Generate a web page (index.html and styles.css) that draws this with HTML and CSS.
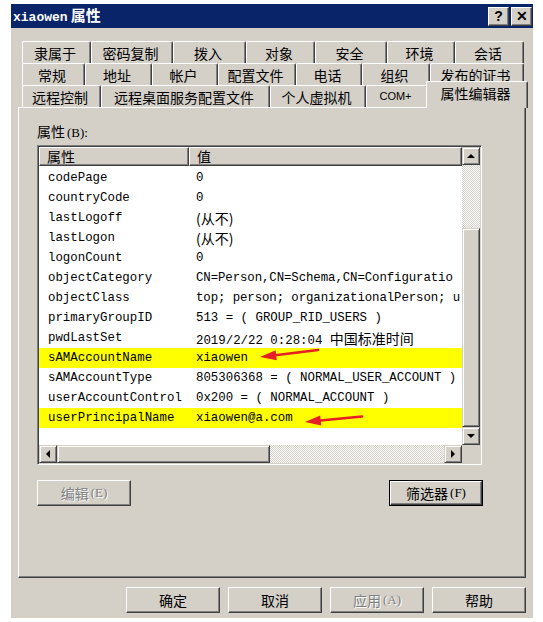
FILE: index.html
```html
<!DOCTYPE html>
<html lang="zh-CN">
<head>
    <meta charset="UTF-8">
    <title>xiaowen 属性</title>
    <link rel="stylesheet" href="styles.css">
</head>
<body>
    <div class="window">
        <div class="titlebar">
            <div class="title"><span class="title-name">xiaowen</span> <span class="title-cjk">属性</span></div>
            <div class="title-buttons">
                <div class="title-btn">?</div>
                <div class="title-btn">&#x2715;</div>
            </div>
        </div>

        <div class="sheet">
            <div class="tabs">
                <div class="tab-row">
                    <div class="tab w69">隶属于</div>
                    <div class="tab w82">密码复制</div>
                    <div class="tab w73">拨入</div>
                    <div class="tab w69">对象</div>
                    <div class="tab w72">安全</div>
                    <div class="tab w68">环境</div>
                    <div class="tab w69">会话</div>
                </div>
                <div class="tab-row">
                    <div class="tab w63">常规</div>
                    <div class="tab w67">地址</div>
                    <div class="tab w66">帐户</div>
                    <div class="tab w78">配置文件</div>
                    <div class="tab w66">电话</div>
                    <div class="tab w68">组织</div>
                    <div class="tab w94">发布的证书</div>
                </div>
                <div class="tab-row">
                    <div class="tab w79">远程控制</div>
                    <div class="tab w169">远程桌面服务配置文件</div>
                    <div class="tab w96">个人虚拟机</div>
                    <div class="tab w62 tab-small">COM+</div>
                    <div class="tab tab-active">属性编辑器</div>
                </div>
            </div>

            <div class="panel">
                <div class="label">属性<span class="mnemonic">(B):</span></div>

                <div class="listview">
                    <div class="list-main">
                        <div class="list-header">
                            <div class="col-head col-name">属性</div>
                            <div class="col-head col-value">值</div>
                        </div>
                        <div class="list-body">
                            <div class="row"><span>codePage</span><span>0</span></div>
                            <div class="row"><span>countryCode</span><span>0</span></div>
                            <div class="row"><span>lastLogoff</span><span class="cjk">(从不)</span></div>
                            <div class="row"><span>lastLogon</span><span class="cjk">(从不)</span></div>
                            <div class="row"><span>logonCount</span><span>0</span></div>
                            <div class="row"><span>objectCategory</span><span class="clip">CN=Person,CN=Schema,CN=Configuratio</span></div>
                            <div class="row"><span>objectClass</span><span class="clip">top; person; organizationalPerson; u</span></div>
                            <div class="row"><span>primaryGroupID</span><span>513 = ( GROUP_RID_USERS )</span></div>
                            <div class="row"><span>pwdLastSet</span><span>2019/2/22 0:28:04 <span class="cjk">中国标准时间</span></span></div>
                            <div class="row row-marked"><span>sAMAccountName</span><span>xiaowen</span></div>
                            <div class="row"><span>sAMAccountType</span><span>805306368 = ( NORMAL_USER_ACCOUNT )</span></div>
                            <div class="row"><span>userAccountControl</span><span>0x200 = ( NORMAL_ACCOUNT )</span></div>
                            <div class="row row-marked"><span>userPrincipalName</span><span>xiaowen@a.com</span></div>

                            <svg class="marks" width="423" height="277" viewBox="0 0 423 277">
                                <line x1="279" y1="184" x2="234" y2="189.5" stroke="#e61e25" stroke-width="2.6" stroke-linecap="round"/>
                                <polygon points="221,191 236.6,184.3 237.8,194.2" fill="#e61e25"/>
                                <line x1="323" y1="250.5" x2="279" y2="254.8" stroke="#e61e25" stroke-width="2.6" stroke-linecap="round"/>
                                <polygon points="266,256 281.2,249.6 282.2,259.6" fill="#e61e25"/>
                            </svg>
                        </div>
                    </div>
                    <div class="vscroll">
                        <div class="sb-btn"><span class="arrow-up"></span></div>
                        <div class="sb-track track-top"></div>
                        <div class="sb-thumb"></div>
                        <div class="sb-btn"><span class="arrow-down"></span></div>
                    </div>
                    <div class="hscroll">
                        <div class="sb-btn"><span class="arrow-left"></span></div>
                        <div class="sb-thumb hthumb"></div>
                        <div class="sb-track"></div>
                        <div class="sb-btn"><span class="arrow-right"></span></div>
                    </div>
                    <div class="corner"></div>
                </div>

                <div class="panel-buttons">
                    <div class="btn btn-disabled">编辑<span class="mnemonic">(E)</span></div>
                    <div class="btn btn-default"><div class="btn-inner">筛选器<span class="mnemonic">(F)</span></div></div>
                </div>
            </div>

            <div class="dialog-buttons">
                <div class="btn">确定</div>
                <div class="btn">取消</div>
                <div class="btn btn-disabled">应用<span class="mnemonic">(A)</span></div>
                <div class="btn">帮助</div>
            </div>
        </div>
    </div>
</body>
</html>
```

FILE: styles.css
```css
* {
    margin: 0;
    padding: 0;
    box-sizing: border-box;
}

body {
    background: #fff;
    color: #000;
    font-family: "Noto Sans CJK SC", sans-serif;
    font-size: 14px;
}

.window {
    margin: 4px 0 0 11px;
    width: 522px;
    height: 614px;
    background: #d4d0c8;
}

/* title bar */
.titlebar {
    height: 24px;
    background: #0a246a;
    display: flex;
    align-items: center;
    justify-content: space-between;
    padding: 0 1px 0 2px;
}

.title {
    color: #fff;
    font-weight: bold;
    line-height: 24px;
    white-space: nowrap;
}

.title-name {
    font-family: "Liberation Mono", monospace;
    font-size: 13px;
}

.title-cjk {
    font-size: 15px;
}

.title-buttons {
    display: flex;
    gap: 2px;
}

.title-btn {
    width: 21px;
    height: 19px;
    background: #d4d0c8;
    border-top: 1px solid #fff;
    border-left: 1px solid #fff;
    border-right: 1px solid #404040;
    border-bottom: 1px solid #404040;
    box-shadow: inset -1px -1px #808080;
    font-family: "Liberation Sans", sans-serif;
    font-weight: bold;
    font-size: 14px;
    line-height: 16px;
    text-align: center;
}

/* tabs */
.sheet {
    padding: 13px 7px 0 7px;
}

.tabs {
    padding-left: 4px;
}

.tab-row {
    display: flex;
    align-items: flex-end;
    height: 22px;
}

.tab {
    height: 22px;
    flex: none;
    display: flex;
    align-items: center;
    justify-content: center;
    border-top: 1px solid #fff;
    border-left: 1px solid #fff;
    border-right: 1px solid #404040;
    box-shadow: inset -1px 0 #808080;
    border-radius: 2px 2px 0 0;
    font-size: 14px;
    line-height: 1;
    white-space: nowrap;
    padding-right: 3px;
}

.w62 { width: 62px; }
.w63 { width: 63px; }
.w66 { width: 66px; }
.w67 { width: 67px; }
.w68 { width: 68px; }
.w69 { width: 69px; }
.w72 { width: 72px; }
.w73 { width: 73px; }
.w78 { width: 78px; }
.w79 { width: 79px; }
.w82 { width: 82px; }
.w94 { width: 94px; }
.w96 { width: 96px; }
.w169 { width: 169px; }

.tab-small {
    font-family: "Liberation Sans", sans-serif;
    font-size: 11px;
}

.tab-active {
    position: relative;
    z-index: 1;
    width: 102px;
    height: 27px;
    margin-left: -2px;
    margin-bottom: -1px;
    padding-bottom: 4px;
    background: #d4d0c8;
}

/* property page */
.panel {
    height: 471px;
    border-top: 1px solid #fff;
    border-left: 1px solid #fff;
    border-right: 1px solid #404040;
    border-bottom: 1px solid #404040;
    box-shadow: inset -1px -1px #808080;
    padding: 15px 0 0 18px;
}

.label {
    height: 16px;
    line-height: 16px;
    font-size: 14px;
}

.mnemonic {
    font-family: "Liberation Serif", serif;
    font-size: 13px;
    margin-left: 2px;
}

.listview {
    margin-top: 6px;
    width: 445px;
    height: 320px;
    border-top: 1px solid #808080;
    border-left: 1px solid #808080;
    border-right: 1px solid #fff;
    border-bottom: 1px solid #fff;
    box-shadow: inset 1px 1px #404040, inset -1px -1px #d4d0c8;
    padding: 1px;
    display: grid;
    grid-template-columns: 1fr 18px;
    grid-template-rows: 1fr 18px;
    background: #fff;
}

.list-main {
    overflow: hidden;
    display: flex;
    flex-direction: column;
}

.list-header {
    display: flex;
    height: 19px;
    flex: none;
}

.col-head {
    background: #d4d0c8;
    border-top: 1px solid #fff;
    border-left: 1px solid #fff;
    border-right: 1px solid #404040;
    border-bottom: 1px solid #404040;
    box-shadow: inset -1px -1px #808080;
    font-size: 14px;
    line-height: 16px;
    padding-left: 7px;
}

.col-name {
    width: 150px;
}

.col-value {
    flex: 1;
}

.list-body {
    position: relative;
    flex: 1;
    padding-top: 2px;
}

.row {
    display: grid;
    grid-template-columns: 148px 1fr;
    height: 20px;
    line-height: 20px;
    padding-left: 9px;
    font-family: "Liberation Mono", "Noto Sans CJK SC", monospace;
    font-size: 12.4px;
    white-space: nowrap;
    overflow: hidden;
}

.row-marked {
    background: #ffff00;
}

.cjk {
    font-family: "Noto Sans CJK SC", sans-serif;
    font-size: 14px;
}

.clip {
    letter-spacing: -0.1px;
}

.marks {
    position: absolute;
    left: 0;
    top: 0;
}

/* scrollbars */
.vscroll {
    display: flex;
    flex-direction: column;
}

.hscroll {
    display: flex;
}

.sb-btn {
    width: 18px;
    height: 18px;
    flex: none;
    background: #d4d0c8;
    border-top: 1px solid #d4d0c8;
    border-left: 1px solid #d4d0c8;
    border-right: 1px solid #404040;
    border-bottom: 1px solid #404040;
    box-shadow: inset 1px 1px #fff, inset -1px -1px #808080;
    display: flex;
    align-items: center;
    justify-content: center;
}

.sb-track {
    flex: 1;
    background: repeating-conic-gradient(#d4d0c8 0 25%, #fff 0 50%) 0 0 / 2px 2px;
}

.track-top {
    flex: none;
    height: 63px;
}

.sb-thumb {
    flex: 1;
    background: #d4d0c8;
    border-top: 1px solid #d4d0c8;
    border-left: 1px solid #d4d0c8;
    border-right: 1px solid #404040;
    border-bottom: 1px solid #404040;
    box-shadow: inset 1px 1px #fff, inset -1px -1px #808080;
}

.hthumb {
    flex: none;
    width: 213px;
}

.corner {
    background: #d4d0c8;
}

.arrow-up,
.arrow-down,
.arrow-left,
.arrow-right {
    width: 0;
    height: 0;
}

.arrow-up {
    border-left: 4px solid transparent;
    border-right: 4px solid transparent;
    border-bottom: 4px solid #000;
}

.arrow-down {
    border-left: 4px solid transparent;
    border-right: 4px solid transparent;
    border-top: 4px solid #000;
}

.arrow-left {
    border-top: 4px solid transparent;
    border-bottom: 4px solid transparent;
    border-right: 4px solid #000;
}

.arrow-right {
    border-top: 4px solid transparent;
    border-bottom: 4px solid transparent;
    border-left: 4px solid #000;
}

/* buttons */
.btn {
    width: 94px;
    height: 26px;
    background: #d4d0c8;
    border-top: 1px solid #fff;
    border-left: 1px solid #fff;
    border-right: 1px solid #404040;
    border-bottom: 1px solid #404040;
    box-shadow: inset -1px -1px #808080;
    display: flex;
    align-items: center;
    justify-content: center;
    font-size: 14px;
    white-space: nowrap;
}

.btn-disabled {
    color: #808080;
    text-shadow: 1px 1px 0 #fff;
}

.btn-default {
    border: 1px solid #000;
    box-shadow: none;
    padding: 0;
}

.btn-inner {
    width: 100%;
    height: 100%;
    border-top: 1px solid #fff;
    border-left: 1px solid #fff;
    border-right: 1px solid #404040;
    border-bottom: 1px solid #404040;
    box-shadow: inset -1px -1px #808080;
    display: flex;
    align-items: center;
    justify-content: center;
}

.panel-buttons {
    display: flex;
    justify-content: space-between;
    width: 446px;
    margin-top: 15px;
}

.dialog-buttons {
    display: flex;
    justify-content: flex-end;
    gap: 8px;
    margin-top: 9px;
}
```
